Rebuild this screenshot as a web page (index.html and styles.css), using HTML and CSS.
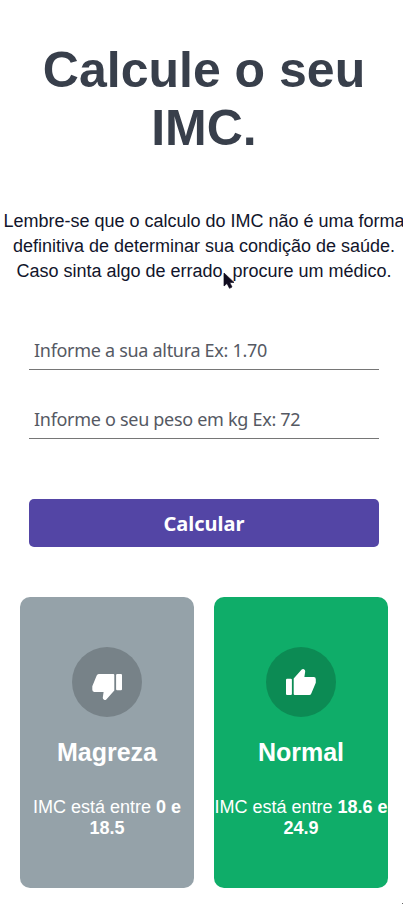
FILE: index.html
```html
<!DOCTYPE html>
<html lang="pt-BR">
<head>
<meta charset="utf-8">
<title>Calcule o seu IMC</title>
<link rel="stylesheet" href="styles.css">
</head>
<body>
<main class="page">
  <h1 class="title">Calcule o seu<br>IMC.</h1>
  <p class="intro">Lembre-se que o calculo do IMC não é uma forma<br>definitiva de determinar sua condição de saúde.<br>Caso sinta algo de errado, procure um médico.</p>
  <form class="form">
    <input class="field" type="text" placeholder="Informe a sua altura Ex: 1.70">
    <input class="field" type="text" placeholder="Informe o seu peso em kg Ex: 72">
    <button class="submit" type="button">Calcular</button>
  </form>
  <section class="cards">
    <article class="card card-thin">
      <div class="badge">
        <svg width="30" height="28" viewBox="0 0 30 28" fill="#fff"><path d="M6.7 1H21.3Q22.3 1 22.3 2V17.6L14.3 26.4Q13.3 27.5 12 26.8Q10.6 26 10.8 24.6L11.6 18.9H2.2Q.3 18.9.3 16.8V13.2L4.7 2.6Q5.3 1 6.7 1Z"/><path d="M25.1 1H28.9Q30 1 30 2V16.2Q30 17.2 28.9 17.2H25.1Q24.1 17.2 24.1 16.2V2Q24.1 1 25.1 1Z"/></svg>
      </div>
      <h2 class="name">Magreza</h2>
      <p class="range">IMC está entre <b>0 e<br>18.5</b></p>
    </article>
    <article class="card card-normal">
      <div class="badge">
        <svg width="30" height="28" viewBox="0 0 30 28" fill="#fff"><path d="M1.1 10.8H4.9Q5.9 10.8 5.9 11.8V26Q5.9 27 4.9 27H1.1Q0 27 0 26V11.8Q0 10.8 1.1 10.8Z"/><path d="M8.7 27Q7.7 27 7.7 26V10.4L15.7 1.6Q16.7.5 18 1.2Q19.4 2 19.2 3.4L18.4 9.1H27.8Q29.8 9.1 29.8 11.2V14.8L25.3 25.4Q24.7 27 23.3 27Z"/></svg>
      </div>
      <h2 class="name">Normal</h2>
      <p class="range">IMC está entre <b>18.6 e<br>24.9</b></p>
    </article>
  </section>
</main>
<svg class="pointer" width="12" height="18" viewBox="0 0 12 18"><path d="M1 1V14L4 11.4L6.5 16.3L9 15L6.7 10.4H11Z" fill="#100c20" stroke="#100c20" stroke-width=".7"/></svg>
<span class="corner"></span>
</body>
</html>
```
FILE: styles.css
```css
* {
  box-sizing: border-box;
  margin: 0;
  padding: 0;
}

html {
  overflow: hidden;
}

body {
  position: relative;
  width: 403px;
  height: 904px;
  overflow: hidden;
  background: #fff;
  font-family: "Liberation Sans", Arial, sans-serif;
}

.page {
  width: 408px;
  padding-top: 41px;
}

.title {
  font-size: 50px;
  line-height: 58px;
  text-align: center;
  color: #383f4b;
}

.intro {
  margin-top: 52px;
  font-size: 18px;
  line-height: 25px;
  text-align: center;
  white-space: nowrap;
  color: #11152b;
}

.form {
  display: flex;
  flex-direction: column;
  width: 350px;
  margin: 48px auto 0 29px;
}

.field {
  height: 38px;
  margin-bottom: 31px;
  padding: 0 5px 1px;
  border: 0;
  border-bottom: 1px solid #767676;
  background: transparent;
  font-family: "Noto Sans", sans-serif;
  font-size: 18px;
  letter-spacing: -0.3px;
}

.field::placeholder {
  color: #555963;
  opacity: 1;
}

.submit {
  height: 48px;
  margin-top: 29px;
  border: 0;
  border-radius: 5px;
  background: #5345a5;
  color: #fff;
  font: bold 20px "Noto Sans", sans-serif;
}

.cards {
  display: grid;
  grid-template-columns: 174px 174px;
  gap: 20px;
  margin: 50px 0 0 20px;
}

.card {
  display: flex;
  flex-direction: column;
  align-items: center;
  height: 291px;
  padding-top: 50px;
  border-radius: 10px;
  color: #fff;
  text-align: center;
}

.card-thin {
  background: #95a2a9;
}

.card-normal {
  background: #0fad69;
}

.badge {
  display: flex;
  align-items: center;
  justify-content: center;
  width: 70px;
  height: 70px;
  border-radius: 50%;
  background: #778288;
}

.card-thin .badge svg {
  margin-top: 10px;
}

.card-normal .badge {
  background: #0c8b54;
}

.name {
  margin-top: 21px;
  font-size: 25px;
  line-height: 29px;
}

.range {
  margin-top: 30px;
  font-size: 18px;
  line-height: 21px;
  white-space: nowrap;
}

.pointer {
  position: absolute;
  left: 223px;
  top: 272px;
}

.corner {
  position: absolute;
  right: 0;
  bottom: 0;
  width: 1px;
  height: 1px;
  background: #666;
}
```
